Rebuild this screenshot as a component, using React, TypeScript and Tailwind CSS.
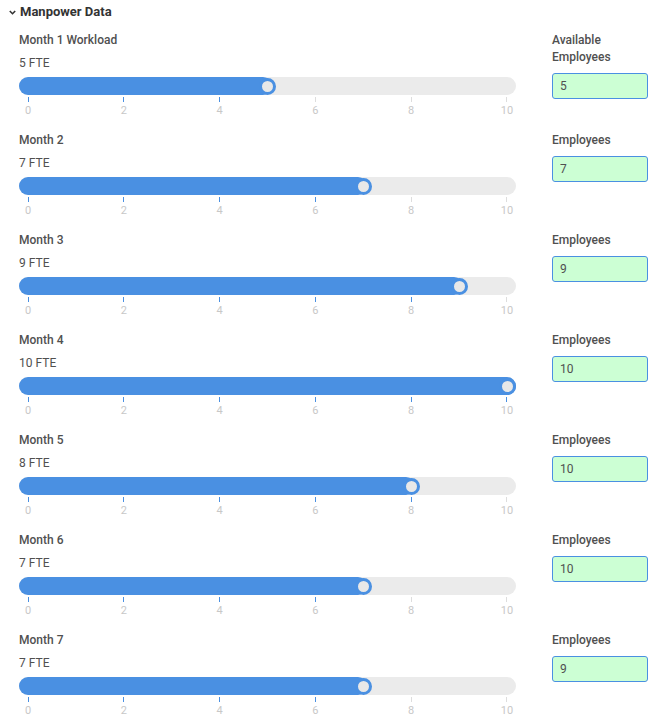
const rows = [
  { label: "Month 1 Workload", fte: 5, emp: 5, empLabel: "Available Employees" },
  { label: "Month 2", fte: 7, emp: 7, empLabel: "Employees" },
  { label: "Month 3", fte: 9, emp: 9, empLabel: "Employees" },
  { label: "Month 4", fte: 10, emp: 10, empLabel: "Employees" },
  { label: "Month 5", fte: 8, emp: 10, empLabel: "Employees" },
  { label: "Month 6", fte: 7, emp: 10, empLabel: "Employees" },
  { label: "Month 7", fte: 7, emp: 9, empLabel: "Employees" },
];

const Slider = ({ value }: { value: number }) => {
  const center = 9 + (479 * value) / 10;
  return (
    <div>
      <div className="relative w-[497px] h-[18px] rounded-full bg-[#ebebeb]">
        <div
          className="absolute left-0 top-0 h-[18px] rounded-full bg-[#4a90e2]"
          style={{ width: value >= 10 ? 497 : center + 4 }}
        />
        <div
          className="absolute top-[0.5px] w-[17px] h-[17px] rounded-full bg-[#e8e8e8] border-[3px] border-[#4a90e2]"
          style={{ left: center - 8.5 }}
        />
      </div>
      <div className="flex justify-between px-[9px] mt-[2px]">
        {[0, 2, 4, 6, 8, 10].map((t) => (
          <div key={t} className="w-0 flex flex-col items-center">
            <div className={`w-[1px] h-[5px] shrink-0 ${t <= value ? "bg-[#4a90e2]" : "bg-[#dddddd]"}`} />
            <span className="text-[11px] leading-[13px] mt-[2px] text-[#c8c8c8]">{t}</span>
          </div>
        ))}
      </div>
    </div>
  );
};

export default function App() {
  return (
    <div className="w-[660px] h-[724px] bg-white overflow-hidden font-['Roboto',sans-serif] text-[#505050]">
      <div className="flex items-center h-[24px] pl-[9px] gap-[4px]">
        <svg width="7" height="5" viewBox="0 0 7 5" className="mt-[1px]">
          <path d="M0.8 1 L3.5 3.7 L6.2 1" stroke="#333" strokeWidth="1.6" fill="none" />
        </svg>
        <span className="text-[13px] font-bold text-[#333]">Manpower Data</span>
      </div>
      {rows.map((r) => (
        <div key={r.label} className="flex h-[100px] pl-[19px] pt-[8px] gap-[36px]">
          <div className="flex flex-col w-[497px]">
            <div className="text-[12px] leading-[16px] font-medium">{r.label}</div>
            <div className="text-[12px] leading-[16px] mt-[7px]">{r.fte} FTE</div>
            <div className="mt-[6px]">
              <Slider value={r.fte} />
            </div>
          </div>
          <div className="flex flex-col w-[96px]">
            <div className="text-[12px] leading-[17px] font-medium">{r.empLabel}</div>
            <input
              readOnly
              value={r.emp}
              className="mt-[7px] w-[96px] h-[26px] px-[7px] text-[12px] text-[#505050] bg-[#ccffd4] border border-[#4a90e2] rounded-[3px] outline-none"
            />
          </div>
        </div>
      ))}
    </div>
  );
}
